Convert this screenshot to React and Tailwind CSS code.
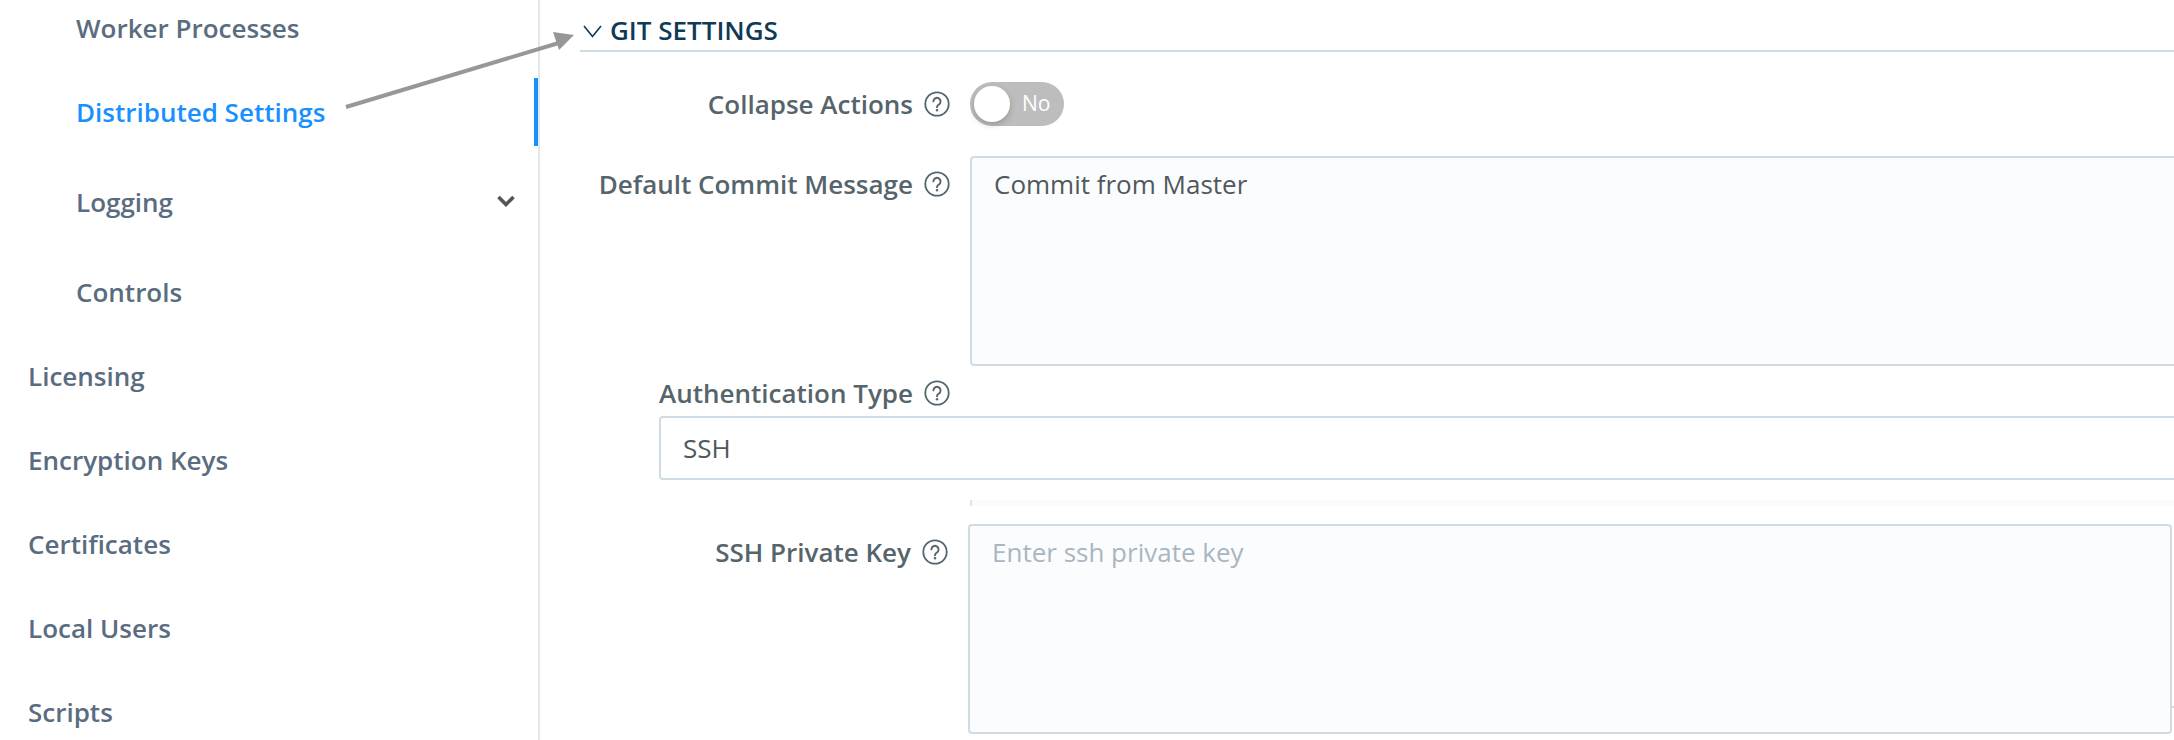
import React from "react";

function Help() {
  return (
    <svg width="26" height="26" viewBox="0 0 26 26" fill="none" className="shrink-0">
      <circle cx="13" cy="13" r="11.7" stroke="#56646b" strokeWidth="1.8" />
      <path d="M9.4 10.4a3.6 3.6 0 1 1 5.5 3.1c-1.2.7-1.9 1.3-1.9 2.7" stroke="#56646b" strokeWidth="1.9" strokeLinecap="round" />
      <circle cx="13" cy="19.2" r="1.2" fill="#56646b" />
    </svg>
  );
}

function Label({ children, w, className = "" }) {
  return (
    <div className={`flex shrink-0 items-center justify-end gap-[11px] text-[26px] leading-[30px] font-semibold text-[#56646b] ${w} ${className}`}>
      <span>{children}</span>
      <Help />
    </div>
  );
}

function SubItem({ children, active, chevron, h = "h-[68px]", className = "" }) {
  return (
    <div className={`flex items-center pl-[76px] text-[26px] font-semibold ${h} ${active ? "text-[#1890ff] border-r-4 border-[#1890ff]" : "text-[#5a6d80]"} ${className}`}>
      <span className="flex-1">{children}</span>
      {chevron && (
        <svg width="18" height="12" viewBox="0 0 18 12" fill="none" className="mr-[23px] mb-[2px]">
          <path d="M1.5 2l7.5 7.5L16.5 2" stroke="#555" strokeWidth="3.6" />
        </svg>
      )}
    </div>
  );
}

function TopItem({ children }) {
  return <div className="flex items-center h-[84px] pl-[28px] text-[26px] font-semibold text-[#5a6d80]">{children}</div>;
}

export default function App() {
  return (
    <div className="relative flex w-[2174px] h-[740px] overflow-hidden bg-white font-['Open_Sans',sans-serif]">
      <aside className="w-[540px] shrink-0 h-full border-r-2 border-[#e4e7ea]">
        <SubItem h="h-[56px]">Worker Processes</SubItem>
        <SubItem active className="mt-[22px]">Distributed Settings</SubItem>
        <SubItem chevron className="mt-[22px]">Logging</SubItem>
        <SubItem className="mt-[22px]">Controls</SubItem>
        <div className="mt-[8px]">
          <TopItem>Licensing</TopItem>
          <TopItem>Encryption Keys</TopItem>
          <TopItem>Certificates</TopItem>
          <TopItem>Local Users</TopItem>
          <TopItem>Scripts</TopItem>
        </div>
      </aside>

      <main className="flex-1 min-w-0 pl-[40px]">
        <div className="flex items-center h-[52px] pt-[10px] border-b-2 border-[#cfdce4]">
          <svg width="19" height="13" viewBox="0 0 19 13" fill="none" className="ml-[3px] mr-[8px] mt-[2px]">
            <path d="M1 1l8.5 10.5L18 1" stroke="#0f3a57" strokeWidth="1.6" />
          </svg>
          <span className="text-[26px] font-semibold text-[#0f3a57]">GIT SETTINGS</span>
        </div>

        <div className="flex items-center h-[44px] mt-[30px]">
          <Label w="w-[370px]">Collapse Actions</Label>
          <div className="ml-[20px] w-[94px] h-[44px] rounded-full bg-[#bdbdbd] flex items-center pl-[4px]">
            <div className="w-[36px] h-[36px] rounded-full bg-white shadow-[0_3px_6px_rgba(0,0,0,0.2)]" />
            <span className="ml-[12px] text-[21px] text-white">No</span>
          </div>
        </div>

        <div className="flex items-start mt-[30px]">
          <Label w="w-[370px]" className="mt-[13px]">Default Commit Message</Label>
          <textarea
            readOnly
            defaultValue="Commit from Master"
            className="ml-[20px] w-[1220px] h-[210px] shrink-0 resize-none rounded-[4px] border-2 border-[#cfdce4] bg-[#fbfcfe] pl-[22px] pt-[8px] text-[26px] leading-[36px] text-[#50585c] outline-none"
          />
        </div>

        <div className="ml-[79px] mt-[12px]">
          <div className="flex items-center h-[30px]">
            <span className="text-[26px] leading-[30px] font-semibold text-[#56646b]">Authentication Type</span>
            <span className="ml-[11px]"><Help /></span>
          </div>
          <div className="flex items-center mt-[8px] w-[1600px] h-[64px] pl-[22px] rounded-[4px] border-2 border-[#cfdce4] bg-white text-[26px] text-[#50585c]">SSH</div>
        </div>

        <div className="ml-[390px] mt-[20px] h-[6px] bg-[#fafbfc] border-l-2 border-[#dfe6eb]" />

        <div className="flex items-start mt-[18px]">
          <Label w="w-[368px]" className="mt-[13px]">SSH Private Key</Label>
          <textarea
            readOnly
            placeholder="Enter ssh private key"
            className="ml-[20px] w-[1204px] h-[210px] shrink-0 resize-none rounded-[4px] border-2 border-[#cfdce4] bg-[#fbfcfe] pl-[22px] pt-[8px] text-[26px] leading-[36px] text-[#50585c] placeholder:text-[#a9b6c2] outline-none"
          />
        </div>
      </main>

      <div className="absolute left-[2172px] top-[706px] w-[2px] h-[2px] bg-[#cfdce4]" />

      <svg width="250" height="90" viewBox="0 0 250 90" fill="none" className="absolute left-[340px] top-[25px] pointer-events-none">
        <path d="M6 82L222 17" stroke="#979797" strokeWidth="4" />
        <path d="M234 10L213 7L219 25Z" fill="#979797" />
      </svg>
    </div>
  );
}
